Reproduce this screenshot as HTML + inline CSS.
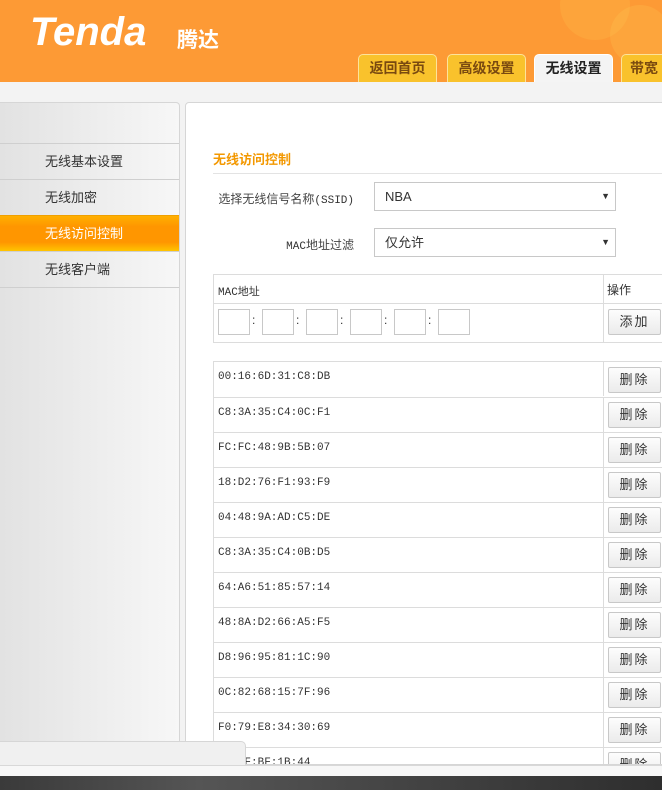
<!DOCTYPE html>
<html><head><meta charset="utf-8"><style>
*{margin:0;padding:0;box-sizing:border-box}
body{width:662px;height:790px;overflow:hidden;background:#f3f3f3;font-family:"Liberation Sans","Noto Sans CJK SC",sans-serif;font-size:12px;color:#333;position:relative}
.hdr{position:absolute;left:0;top:0;width:662px;height:82px;background:#fd9a35;overflow:hidden}
.logo{position:absolute;left:30px;top:10px;color:#fff;font:italic bold 40px "Liberation Sans",sans-serif;letter-spacing:0px}
.logo2{position:absolute;left:177px;top:24px;color:#fff;font-size:21px;font-weight:bold;font-family:"Noto Sans CJK SC",sans-serif}
.tab{position:absolute;top:54px;height:28px;width:79px;background:#f9c22c;border:1px solid #fde39a;border-bottom:none;border-radius:5px 5px 0 0;text-align:center;line-height:27px;font-size:14px;color:#7a4a10;font-weight:bold}
.side{position:absolute;left:0;top:102px;width:180px;height:640px;background:linear-gradient(90deg,#e2e2e2,#f7f7f7);border:1px solid #d6d6d6;border-left:none;border-radius:0 4px 0 0}
.mi{position:absolute;left:0;width:179px;height:36px;border-top:1px solid #cfcfcf;line-height:35px;padding-left:45px;font-size:13px;color:#333}
.main{position:absolute;left:185px;top:102px;width:480px;height:663px;background:#fff;border:1px solid #d6d6d6;border-radius:4px 0 0 0;overflow:hidden}
.abs{position:absolute}
.sel{position:absolute;left:188px;width:242px;height:29px;border:1px solid #c8c8c8;line-height:27px;padding-left:10px;font-size:13px;color:#333}
.sel:after{content:"▼";position:absolute;right:5px;top:0;font-size:9px}
.lbl{position:absolute;width:168px;text-align:right;font-size:12px;color:#444}
.mono{font-family:"Liberation Mono",monospace;font-size:11px;color:#333}
.btn{position:absolute;left:422px;width:53px;height:26px;border:1px solid #c8c8c8;border-radius:2px;background:linear-gradient(#fdfdfd,#ebebeb);text-align:center;line-height:24px;font-size:13px;letter-spacing:2px;color:#333}
.row{position:absolute;left:27px;width:460px;height:36px;border:1px solid #dcdcdc}
.row .v{position:absolute;left:389px;top:0;height:34px;border-left:1px solid #dcdcdc}
.inp{position:absolute;top:5px;width:32px;height:26px;border:1px solid #c8c8c8}
</style></head><body>
<div class="hdr">
 <div class="abs" style="left:560px;top:-30px;width:70px;height:70px;border-radius:50%;background:rgba(255,210,90,.18)"></div>
 <div class="abs" style="left:610px;top:5px;width:60px;height:60px;border-radius:50%;background:rgba(255,210,90,.2)"></div>
 <div class="logo">Tenda</div><div class="logo2">腾达</div>
 <div class="tab" style="left:358px">返回首页</div>
 <div class="tab" style="left:447px">高级设置</div>
 <div class="tab" style="left:534px;background:#f4f4f4;border-color:#fff;color:#222">无线设置</div>
 <div class="tab" style="left:621px;text-align:left;padding-left:8px">带宽</div>
</div>
<div class="side">
 <div class="mi" style="top:40px">无线基本设置</div>
 <div class="mi" style="top:76px">无线加密</div>
 <div class="mi" style="top:112px;background:linear-gradient(#ffb000,#ff9600 30%,#ff9600 75%,#ffc400);color:#fff;border-top-color:#f0a000">无线访问控制</div>
 <div class="mi" style="top:148px">无线客户端</div>
 <div class="mi" style="top:184px;height:1px"></div>
</div>
<div class="main">
 <div class="abs" style="left:27px;top:46px;font-size:13px;font-weight:bold;color:#f39800">无线访问控制</div>
 <div class="abs" style="left:27px;top:70px;width:460px;border-top:1px solid #e3e3e3"></div>
 <div class="lbl" style="top:87px">选择无线信号名称<span class="mono">(SSID)</span></div>
 <div class="sel" style="top:79px">NBA</div>
 <div class="lbl" style="top:133px"><span class="mono">MAC</span>地址过滤</div>
 <div class="sel" style="top:125px">仅允许</div>
 <div class="row" style="top:171px;height:30px;border-bottom:none"><div class="v" style="height:29px"></div><span class="abs mono" style="left:4px;top:8px">MAC地址</span><span class="abs" style="left:393px;top:6px">操作</span></div>
 <div class="row" style="top:200px;height:40px"><div class="v" style="height:38px"></div>
  <div class="inp" style="left:4px"></div><span class="abs" style="left:38px;top:9px">:</span>
  <div class="inp" style="left:48px"></div><span class="abs" style="left:82px;top:9px">:</span>
  <div class="inp" style="left:92px"></div><span class="abs" style="left:126px;top:9px">:</span>
  <div class="inp" style="left:136px"></div><span class="abs" style="left:170px;top:9px">:</span>
  <div class="inp" style="left:180px"></div><span class="abs" style="left:214px;top:9px">:</span>
  <div class="inp" style="left:224px"></div>
 </div>
 <div class="btn" style="top:206px">添加</div>
 <div class="row" style="top:258px;height:37px"><div class="v"></div><span class="abs mono" style="left:4px;top:9px">00:16:6D:31:C8:DB</span></div><div class="btn" style="top:264px">删除</div>
 <div class="row" style="top:294px"><div class="v"></div><span class="abs mono" style="left:4px;top:9px">C8:3A:35:C4:0C:F1</span></div><div class="btn" style="top:299px">删除</div>
 <div class="row" style="top:329px"><div class="v"></div><span class="abs mono" style="left:4px;top:9px">FC:FC:48:9B:5B:07</span></div><div class="btn" style="top:334px">删除</div>
 <div class="row" style="top:364px"><div class="v"></div><span class="abs mono" style="left:4px;top:9px">18:D2:76:F1:93:F9</span></div><div class="btn" style="top:369px">删除</div>
 <div class="row" style="top:399px"><div class="v"></div><span class="abs mono" style="left:4px;top:9px">04:48:9A:AD:C5:DE</span></div><div class="btn" style="top:404px">删除</div>
 <div class="row" style="top:434px"><div class="v"></div><span class="abs mono" style="left:4px;top:9px">C8:3A:35:C4:0B:D5</span></div><div class="btn" style="top:439px">删除</div>
 <div class="row" style="top:469px"><div class="v"></div><span class="abs mono" style="left:4px;top:9px">64:A6:51:85:57:14</span></div><div class="btn" style="top:474px">删除</div>
 <div class="row" style="top:504px"><div class="v"></div><span class="abs mono" style="left:4px;top:9px">48:8A:D2:66:A5:F5</span></div><div class="btn" style="top:509px">删除</div>
 <div class="row" style="top:539px"><div class="v"></div><span class="abs mono" style="left:4px;top:9px">D8:96:95:81:1C:90</span></div><div class="btn" style="top:544px">删除</div>
 <div class="row" style="top:574px"><div class="v"></div><span class="abs mono" style="left:4px;top:9px">0C:82:68:15:7F:96</span></div><div class="btn" style="top:579px">删除</div>
 <div class="row" style="top:609px"><div class="v"></div><span class="abs mono" style="left:4px;top:9px">F0:79:E8:34:30:69</span></div><div class="btn" style="top:614px">删除</div>
 <div class="row" style="top:644px"><div class="v"></div><span class="abs mono" style="left:4px;top:9px">14:2F:BF:1B:44</span></div><div class="btn" style="top:649px">删除</div>
</div>
<div class="abs" style="left:0;top:741px;width:246px;height:26px;background:#f0f0f0;border:1px solid #d6d6d6;border-left:none;border-radius:0 5px 0 0"></div>
<div class="abs" style="left:0;top:765px;width:662px;height:11px;background:#f7f7f7;border-top:1px solid #d8d8d8"></div>
<div class="abs" style="left:0;top:776px;width:662px;height:14px;background:linear-gradient(90deg,#3a3a3a,#555 30%,#2e2e2e)"></div>
</body></html>
